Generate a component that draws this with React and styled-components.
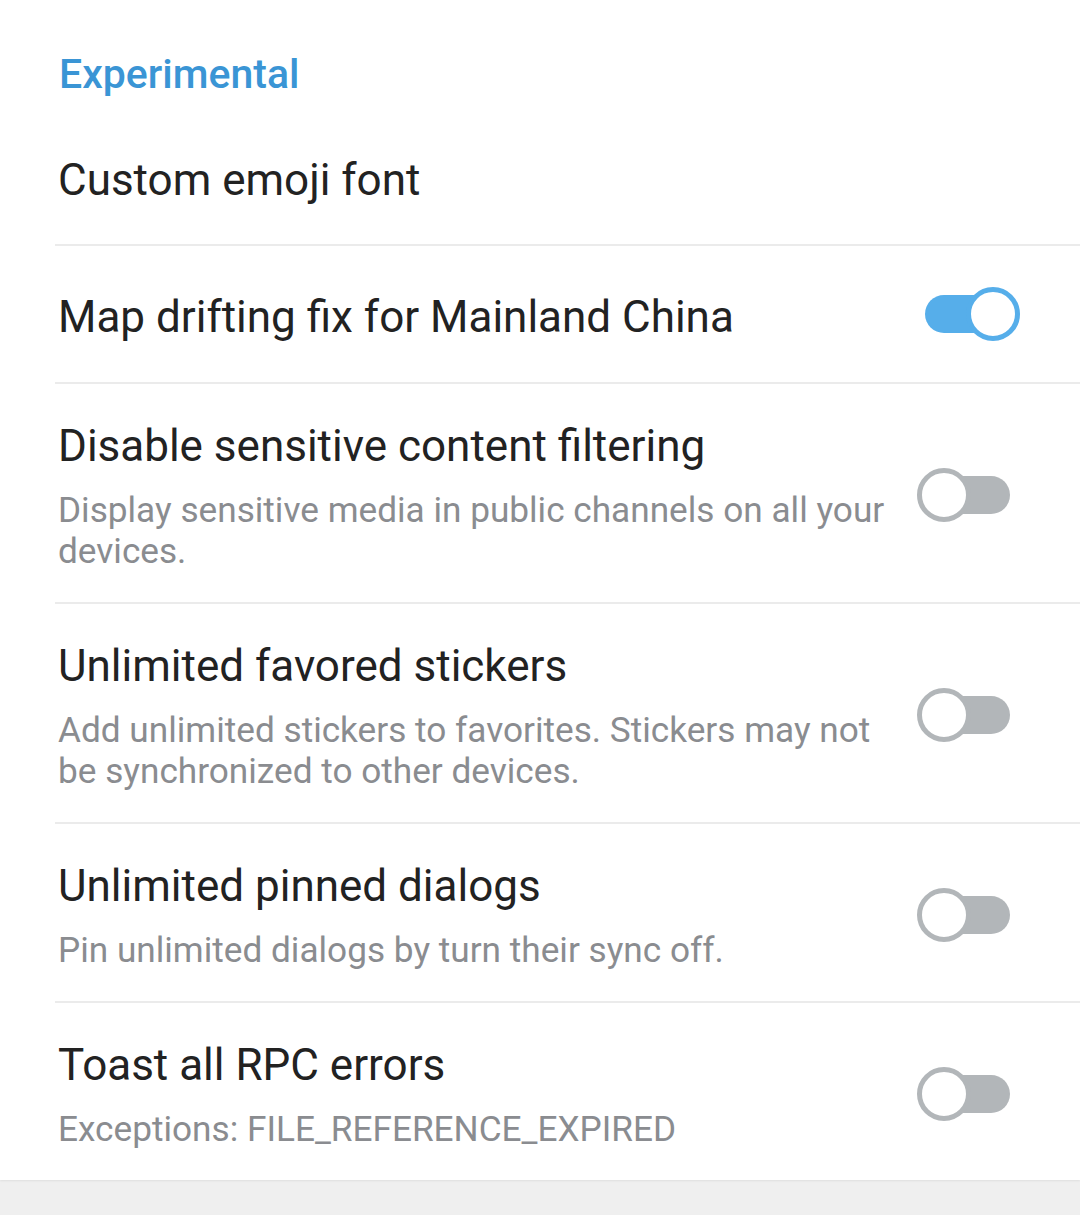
import React from "react";
import styled, { createGlobalStyle } from "styled-components";

const GlobalStyle = createGlobalStyle`
  html, body {
    margin: 0;
    padding: 0;
    background: #efefef;
  }
  body {
    font-family: Roboto, "Noto Sans", "Liberation Sans", sans-serif;
    -webkit-font-smoothing: antialiased;
  }
`;

const Page = styled.div`
  width: 1080px;
  min-height: 1215px;
  background: #efefef;
`;

const Section = styled.section`
  background: #ffffff;
  box-shadow: 0 1px 2px rgba(0, 0, 0, 0.07);
  padding-top: 51px;
`;

const Header = styled.h2`
  margin: 0;
  padding-left: 59px;
  font-size: 41px;
  line-height: 46px;
  font-weight: 500;
  color: #3a95d5;
`;

const Row = styled.div`
  display: flex;
  align-items: center;
  gap: 12px;
  padding: ${(p) => p.$pad || "36px 60px 30px 58px"};
`;

const Texts = styled.div`
  flex: 1;
  min-width: 0;
  display: flex;
  flex-direction: column;
`;

const Title = styled.div`
  font-size: 44px;
  line-height: 52px;
  color: #222222;
`;

const Subtitle = styled.div`
  margin-top: 18px;
  font-size: 35.2px;
  line-height: 41px;
  color: #8a8c90;
`;

const Divider = styled.div`
  height: 2px;
  margin-left: 55px;
  background: #ebebeb;
`;

const SwitchBox = styled.div`
  position: relative;
  flex: none;
  width: 104px;
  height: 54px;
  margin-top: ${(p) => p.$shift || 0}px;
`;

const Track = styled.div`
  position: absolute;
  left: 9px;
  right: 10px;
  top: 8px;
  height: 38px;
  border-radius: 19px;
  background: ${(p) => (p.$on ? "#56aeea" : "#b2b6b9")};
`;

const Thumb = styled.div`
  position: absolute;
  top: 0;
  left: ${(p) => (p.$on ? "50px" : "1px")};
  width: 54px;
  height: 54px;
  box-sizing: border-box;
  border-radius: 50%;
  background: #ffffff;
  border: 5px solid ${(p) => (p.$on ? "#56aeea" : "#b2b6b9")};
`;

const Switch = ({ on, shift }) => (
  <SwitchBox $shift={shift}>
    <Track $on={on} />
    <Thumb $on={on} />
  </SwitchBox>
);

const rows = [
  {
    title: "Disable sensitive content filtering",
    sub: "Display sensitive media in public channels on all your devices.",
    on: false,
  },
  {
    title: "Unlimited favored stickers",
    sub: "Add unlimited stickers to favorites. Stickers may not be synchronized to other devices.",
    on: false,
  },
  {
    title: "Unlimited pinned dialogs",
    sub: "Pin unlimited dialogs by turn their sync off.",
    on: false,
  },
  {
    title: "Toast all RPC errors",
    sub: "Exceptions: FILE_REFERENCE_EXPIRED",
    on: false,
  },
];

export default function App() {
  return (
    <Page>
      <GlobalStyle />
      <Section>
        <Header>Experimental</Header>
        <Row $pad="57px 60px 38px 58px">
          <Texts>
            <Title>Custom emoji font</Title>
          </Texts>
        </Row>
        <Divider />
        <Row $pad="45px 60px 39px 58px">
          <Texts>
            <Title>Map drifting fix for Mainland China</Title>
          </Texts>
          <Switch on shift={-6} />
        </Row>
        {rows.map((r) => (
          <React.Fragment key={r.title}>
            <Divider />
            <Row>
              <Texts>
                <Title>{r.title}</Title>
                <Subtitle>{r.sub}</Subtitle>
              </Texts>
              <Switch on={r.on} shift={-2} />
            </Row>
          </React.Fragment>
        ))}
      </Section>
    </Page>
  );
}
